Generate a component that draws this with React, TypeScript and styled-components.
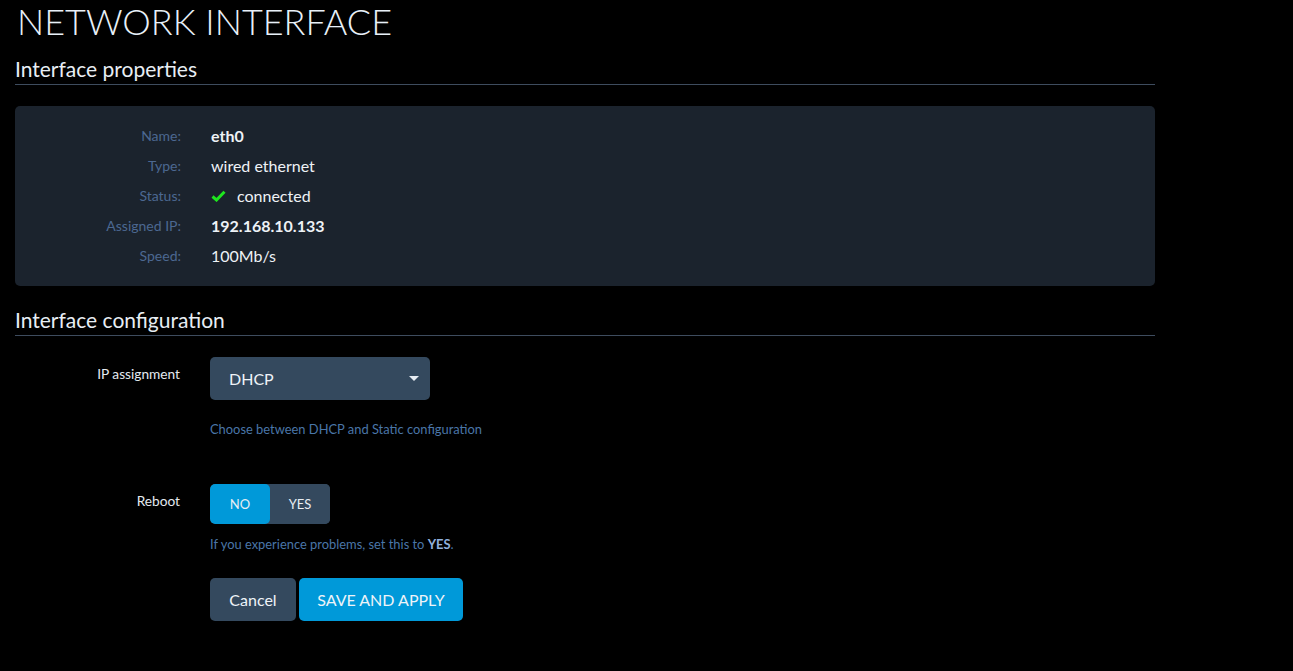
import React from "react";
import styled, { createGlobalStyle } from "styled-components";

const GlobalStyle = createGlobalStyle`
  html, body {
    margin: 0;
    padding: 0;
    background: #000;
  }
  body {
    font-family: Lato, "Open Sans", "Liberation Sans", sans-serif;
    color: #e6ecf2;
    -webkit-font-smoothing: antialiased;
  }
  * { box-sizing: border-box; }
`;

const Page = styled.div`
  width: 1170px;
  padding: 0 15px;
  min-height: 671px;
  background: #000;
`;

const Title = styled.h1`
  margin: 0;
  font-size: 36px;
  line-height: 1.2;
  font-weight: 300;
  color: #e8f0f8;
  padding-left: 2px;
`;

const SectionHeader = styled.h2<{ $top: number }>`
  margin: ${(p) => p.$top}px 0 0;
  font-size: 21px;
  line-height: 1.2;
  font-weight: 400;
  color: #e8eef4;
  padding-bottom: 3px;
  border-bottom: 1px solid #3e4c5e;
`;

const Card = styled.div`
  margin-top: 21px;
  background: #1b232d;
  border-radius: 5px;
  padding: 15px 0;
  display: grid;
  grid-template-columns: 166px 1fr;
  column-gap: 30px;
  grid-auto-rows: 30px;
  align-items: center;
`;

const PropLabel = styled.div`
  text-align: right;
  font-size: 14px;
  color: #4c6891;
`;

const PropValue = styled.div<{ $bold?: boolean }>`
  font-size: 16px;
  font-weight: ${(p) => (p.$bold ? 700 : 400)};
  color: #eef2f6;
  display: flex;
  align-items: center;
  gap: 11px;
`;

const Form = styled.div`
  display: grid;
  grid-template-columns: 165px 1fr;
  column-gap: 30px;
  margin-top: 21px;
`;

const FieldLabel = styled.div`
  text-align: right;
  font-size: 13.7px;
  line-height: 18px;
  padding-top: 8px;
  color: #e4eaf0;
`;

const Field = styled.div<{ $gapBelow?: number }>`
  display: flex;
  flex-direction: column;
  align-items: flex-start;
  margin-bottom: ${(p) => p.$gapBelow ?? 0}px;
`;

const Select = styled.div`
  width: 220px;
  height: 43px;
  background: #34495e;
  border-radius: 5px;
  display: flex;
  align-items: center;
  justify-content: space-between;
  padding: 0 11px 0 19px;
  font-size: 16px;
  color: #eef3f8;
`;

const Caret = styled.span`
  width: 0;
  height: 0;
  border-left: 5px solid transparent;
  border-right: 5px solid transparent;
  border-top: 5px solid #e6ecf2;
`;

const Help = styled.div<{ $top: number }>`
  margin-top: ${(p) => p.$top}px;
  font-size: 12.9px;
  line-height: 18px;
  color: #4a76a8;
`;

const Strong = styled.b`
  color: #8fb0de;
  font-weight: 700;
`;

const Toggle = styled.div`
  display: flex;
  height: 40px;
  border-radius: 5px;
  overflow: hidden;
  background: #34495e;
`;

const ToggleOption = styled.div<{ $active?: boolean }>`
  width: 60px;
  display: flex;
  align-items: center;
  justify-content: center;
  font-size: 13px;
  color: #e8eef4;
  background: ${(p) => (p.$active ? "#0099d9" : "#34495e")};
  border-radius: ${(p) => (p.$active ? "5px" : "0")};
`;

const Buttons = styled.div`
  display: flex;
  gap: 3px;
  margin-top: 25px;
`;

const Button = styled.button<{ $primary?: boolean }>`
  height: 43px;
  border: none;
  border-radius: 5px;
  padding: 0 ${(p) => (p.$primary ? "18px" : "19px")};
  min-width: ${(p) => (p.$primary ? "164px" : "86px")};
  font-family: inherit;
  font-size: 16px;
  color: #eef3f8;
  background: ${(p) => (p.$primary ? "#0099d9" : "#34495e")};
  cursor: pointer;
`;

const Check = () => (
  <svg width="15" height="12" viewBox="0 0 15 12">
    <path d="M1.5 6.5 L5.5 10 L13.5 1.8" fill="none" stroke="#1ee61e" strokeWidth="3" strokeLinejoin="miter" />
  </svg>
);

export default function App() {
  return (
    <>
      <GlobalStyle />
      <Page>
        <Title>NETWORK INTERFACE</Title>
        <SectionHeader $top={12.5}>Interface properties</SectionHeader>
        <Card>
          <PropLabel>Name:</PropLabel>
          <PropValue $bold>eth0</PropValue>
          <PropLabel>Type:</PropLabel>
          <PropValue>wired ethernet</PropValue>
          <PropLabel>Status:</PropLabel>
          <PropValue>
            <Check />
            connected
          </PropValue>
          <PropLabel>Assigned IP:</PropLabel>
          <PropValue $bold>192.168.10.133</PropValue>
          <PropLabel>Speed:</PropLabel>
          <PropValue>100Mb/s</PropValue>
        </Card>
        <SectionHeader $top={21}>Interface configuration</SectionHeader>
        <Form>
          <FieldLabel>IP assignment</FieldLabel>
          <Field $gapBelow={46}>
            <Select>
              DHCP
              <Caret />
            </Select>
            <Help $top={20}>Choose between DHCP and Static configuration</Help>
          </Field>
          <FieldLabel>Reboot</FieldLabel>
          <Field>
            <Toggle>
              <ToggleOption $active>NO</ToggleOption>
              <ToggleOption>YES</ToggleOption>
            </Toggle>
            <Help $top={11}>
              If you experience problems, set this to <Strong>YES</Strong>.
            </Help>
            <Buttons>
              <Button>Cancel</Button>
              <Button $primary>SAVE AND APPLY</Button>
            </Buttons>
          </Field>
        </Form>
      </Page>
    </>
  );
}
